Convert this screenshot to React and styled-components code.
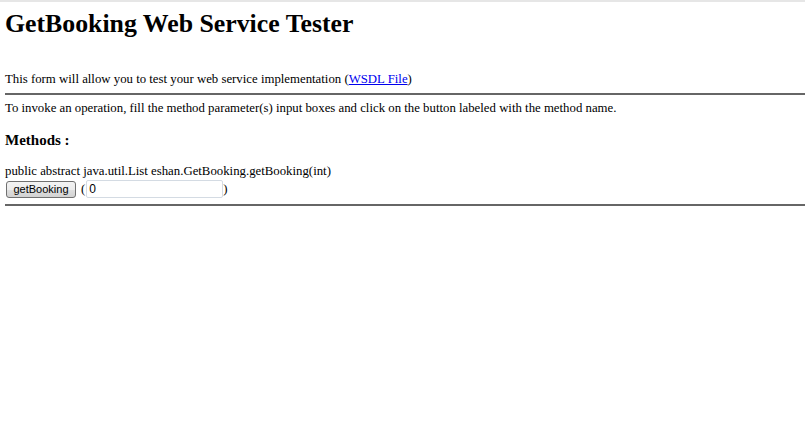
import styled, { createGlobalStyle } from "styled-components";

const GlobalStyle = createGlobalStyle`
    html, body {
        margin: 0;
        padding: 0;
        background: #ffffff;
    }
    body {
        font-family: "Liberation Serif", "Times New Roman", serif;
        color: #000000;
    }
`;

const SPage = styled.div`
    border-top: 2px solid #e6e6e6;
    padding-left: 5px;
    min-height: 441px;
`;

const STitle = styled.h1`
    font-size: 25.8px;
    font-weight: bold;
    margin: 7px 0 0 0;
    line-height: 30px;
`;

const SIntro = styled.p`
    font-size: 12.8px;
    line-height: 15px;
    margin: 33px 0 0 0;

    a {
        color: #0000ee;
        text-decoration: underline;
    }
`;

const SRule = styled.hr`
    border: none;
    border-top: 2px solid #666666;
    margin: ${(p) => p.$top}px 0 0 0;
    height: 0;
`;

const SText = styled.p`
    font-size: 12.8px;
    line-height: 15px;
    margin: 6px 0 0 0;
`;

const SHeading = styled.h4`
    font-size: 15px;
    font-weight: bold;
    line-height: 18px;
    margin: 15px 0 0 0;
`;

const SMethod = styled.div`
    font-size: 12.8px;
    line-height: 15px;
    margin-top: 15px;
`;

const SForm = styled.form`
    display: flex;
    align-items: center;
    font-size: 12.8px;
    margin: 1px 0 0 0;
    height: 18px;
`;

const SButton = styled.button`
    font-family: "Liberation Sans", Arial, sans-serif;
    font-size: 11px;
    height: 17px;
    width: 70px;
    padding: 0;
    margin: 0 5px 0 1px;
    border: 1px solid #707070;
    border-radius: 3px;
    background: linear-gradient(#f3f3f3, #ececec 50%, #dfdfdf 50%, #d2d2d2);
    color: #000000;
    line-height: 15px;
`;

const SInput = styled.input`
    font-family: "Liberation Sans", Arial, sans-serif;
    font-size: 12px;
    width: 131px;
    height: 14px;
    padding: 1px 2px;
    margin: 0 0 0 1px;
    border: 1px solid #d4dbe3;
    border-radius: 2px;
    outline: none;
`;

function App() {
    return (
        <SPage>
            <GlobalStyle />
            <STitle>GetBooking Web Service Tester</STitle>
            <SIntro>
                This form will allow you to test your web service implementation (
                <a href="#wsdl">WSDL File</a>)
            </SIntro>
            <SRule $top={6} />
            <SText>
                To invoke an operation, fill the method parameter(s) input boxes and click on the button labeled with the method name.
            </SText>
            <SHeading>Methods :</SHeading>
            <SMethod>public abstract java.util.List eshan.GetBooking.getBooking(int)</SMethod>
            <SForm onSubmit={(e) => e.preventDefault()}>
                <SButton type="submit">getBooking</SButton>
                (<SInput type="text" defaultValue="0" />)
            </SForm>
            <SRule $top={6} />
        </SPage>
    );
}

export default App;
